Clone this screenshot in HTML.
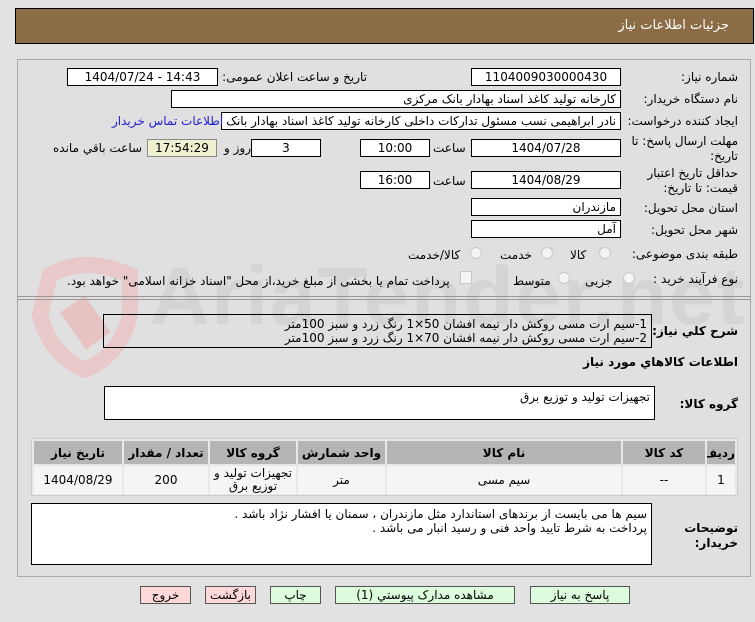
<!DOCTYPE html>
<html><head><meta charset="utf-8"><style>
*{margin:0;padding:0;box-sizing:border-box}
body{width:755px;height:622px;background:#e2e2e2;font-family:Tahoma,"DejaVu Sans","Liberation Sans",sans-serif;font-size:12px;color:#000;position:relative;overflow:hidden}
.a{position:absolute;white-space:nowrap}
.b{position:absolute;background:#fff;border:1px solid #000;direction:rtl;padding:0 4px;line-height:16px;white-space:nowrap;overflow:hidden}
.c{text-align:center;direction:ltr}
.l{direction:rtl;text-align:right}
.rad{position:absolute;width:12px;height:12px;border-radius:50%;border:1px solid #c8c8c8;background:#f4f4f4}
.btn{position:absolute;top:586px;height:18px;border:1px solid #555;text-align:center;line-height:16px;font-size:12px}
table{border-collapse:separate;border-spacing:2px;table-layout:fixed}
td{font-size:12px;text-align:center;overflow:hidden}
</style></head><body>
<div class="a" style="left:15px;top:8px;width:739px;height:36px;background:#8b6c45;border:1px solid #000"></div>
<div class="a" style="right:26px;top:18px;color:#fff;font-size:13px;direction:rtl">جزئیات اطلاعات نیاز</div>
<div class="a" style="left:17px;top:59px;width:734px;height:518px;border:1px solid #aaa;background:#e0e0e0"></div>
<!-- watermark -->
<svg class="a" style="left:20px;top:245px" width="140" height="135"><path d="M30 30 Q65 10 110 30 L110 70 Q100 110 65 125 Q30 110 20 70 Z" fill="none" stroke="#e8c8c8" stroke-width="16"/><rect x="50" y="55" width="30" height="45" fill="#e6c2c2" transform="rotate(-35 65 77)"/></svg>
<div class="a" style="left:150px;top:250px;font-size:82px;font-weight:bold;color:#d4d4d4;font-family:'Liberation Sans',sans-serif;letter-spacing:2px">AriaTender.net</div>
<div class="a" style="left:17px;top:296px;width:734px;height:4px;border-top:1px solid #999;border-bottom:1px solid #999"></div>

<div class="a l" style="right:17px;top:70px">شماره نیاز:</div>
<div class="b c" style="left:471px;top:68px;width:150px;height:18px">1104009030000430</div>
<div class="a l" style="right:388px;top:70px">تاریخ و ساعت اعلان عمومی:</div>
<div class="b c" style="left:67px;top:68px;width:151px;height:18px">1404/07/24 - 14:43</div>

<div class="a l" style="right:17px;top:92px">نام دستگاه خریدار:</div>
<div class="b" style="left:171px;top:90px;width:450px;height:18px">کارخانه تولید کاغذ اسناد بهادار بانک مرکزی</div>

<div class="a l" style="right:17px;top:114px">ایجاد کننده درخواست:</div>
<div class="b" style="left:221px;top:112px;width:400px;height:18px">نادر ابراهیمی نسب مسئول تدارکات داخلی کارخانه تولید کاغذ اسناد بهادار بانک</div>
<div class="a l" style="left:112px;top:114px;color:#2020d0">اطلاعات تماس خریدار</div>

<div class="a l" style="right:17px;top:134px;line-height:15px;text-align:right">مهلت ارسال پاسخ: تا<br>تاریخ:</div>
<div class="b c" style="left:471px;top:139px;width:150px;height:18px">1404/07/28</div>
<div class="a" style="left:433px;top:141px">ساعت</div>
<div class="b c" style="left:360px;top:139px;width:70px;height:18px">10:00</div>
<div class="b c" style="left:251px;top:139px;width:70px;height:18px">3</div>
<div class="a" style="left:224px;top:141px;direction:rtl">روز و</div>
<div class="b c" style="left:147px;top:139px;width:70px;height:18px;background:#f0f0d0;border-color:#888">17:54:29</div>
<div class="a" style="left:53px;top:141px;direction:rtl">ساعت باقي مانده</div>

<div class="a l" style="right:17px;top:166px;line-height:15px">حداقل تاریخ اعتبار<br>قیمت: تا تاریخ:</div>
<div class="b c" style="left:471px;top:171px;width:150px;height:18px">1404/08/29</div>
<div class="a" style="left:433px;top:174px">ساعت</div>
<div class="b c" style="left:360px;top:171px;width:70px;height:18px">16:00</div>

<div class="a l" style="right:17px;top:201px">استان محل تحویل:</div>
<div class="b" style="left:471px;top:198px;width:150px;height:18px">مازندران</div>
<div class="a l" style="right:17px;top:223px">شهر محل تحویل:</div>
<div class="b" style="left:471px;top:220px;width:150px;height:18px">آمل</div>

<div class="a l" style="right:17px;top:247px">طبقه بندی موضوعی:</div>
<div class="rad" style="left:599px;top:247px"></div><div class="a" style="left:570px;top:248px">کالا</div>
<div class="rad" style="left:541px;top:247px"></div><div class="a" style="left:500px;top:248px">خدمت</div>
<div class="rad" style="left:470px;top:247px"></div><div class="a" style="left:408px;top:248px">کالا/خدمت</div>

<div class="a l" style="right:17px;top:272px">نوع فرآیند خرید :</div>
<div class="rad" style="left:623px;top:272px"></div><div class="a" style="left:585px;top:274px">جزیی</div>
<div class="rad" style="left:558px;top:272px"></div><div class="a" style="left:513px;top:274px">متوسط</div>
<div class="a" style="left:460px;top:271px;width:12px;height:13px;border:1px solid #c8c8c8;background:#f4f4f4"></div>
<div class="a" style="left:67px;top:274px;direction:rtl">پرداخت تمام یا بخشی از مبلغ خرید،از محل "اسناد خزانه اسلامی" خواهد بود.</div>

<div class="a l" style="right:17px;top:324px;font-weight:bold">شرح کلي نياز:</div>
<div class="b" style="left:103px;top:314px;width:549px;height:34px;line-height:14px;padding-top:2px;background:transparent">1-سیم ارت مسی روکش دار نیمه افشان 50×1  رنگ زرد و سبز 100متر<br>2-سیم ارت مسی روکش دار نیمه افشان 70×1  رنگ زرد و سبز 100متر</div>

<div class="a l" style="right:17px;top:355px;font-weight:bold">اطلاعات کالاهاي مورد نياز</div>
<div class="a l" style="right:17px;top:397px;font-weight:bold">گروه کالا:</div>
<div class="b" style="left:104px;top:386px;width:551px;height:34px;padding-top:2px">تجهیزات تولید و توزیع برق</div>

<div class="a" style="left:31px;top:438px;width:707px;height:58px;border:1px solid #ccc;background:#e8e8e8"></div>
<div class="a" style="left:32px;top:439px">
<table style="direction:rtl;width:705px">
<colgroup><col style="width:28px"><col style="width:82px"><col style="width:234px"><col style="width:87px"><col style="width:86px"><col style="width:84px"><col></colgroup>
<tr style="background:#b5b5b5;height:23px;font-weight:bold"><td>ردیف</td><td>کد کالا</td><td>نام کالا</td><td>واحد شمارش</td><td>گروه کالا</td><td>تعداد / مقدار</td><td>تاریخ نیاز</td></tr>
<tr style="background:#f5f5f5;height:28px"><td>1</td><td>--</td><td>سیم مسی</td><td>متر</td><td style="line-height:13px;white-space:normal">تجهیزات تولید و توزیع برق</td><td>200</td><td>1404/08/29</td></tr>
</table></div>

<div class="a l" style="right:17px;top:521px;font-weight:bold;line-height:15px">توضیحات<br>خریدار:</div>
<div class="b" style="left:31px;top:503px;width:621px;height:62px;line-height:14px;padding-top:3px">سیم ها می بایست از برندهای استاندارد مثل مازندران ، سمنان یا افشار نژاد باشد .<br>پرداخت به شرط تایید واحد فنی و رسید انبار می باشد .</div>

<div class="btn" style="left:140px;width:51px;background:#fcd8d8">خروج</div>
<div class="btn" style="left:205px;width:51px;background:#fcd8d8">بازگشت</div>
<div class="btn" style="left:270px;width:51px;background:#ddfcdd">چاپ</div>
<div class="btn" style="left:335px;width:180px;background:#ddfcdd">مشاهده مدارک پیوستي (1)</div>
<div class="btn" style="left:530px;width:100px;background:#ddfcdd">پاسخ به نیاز</div>
</body></html>
